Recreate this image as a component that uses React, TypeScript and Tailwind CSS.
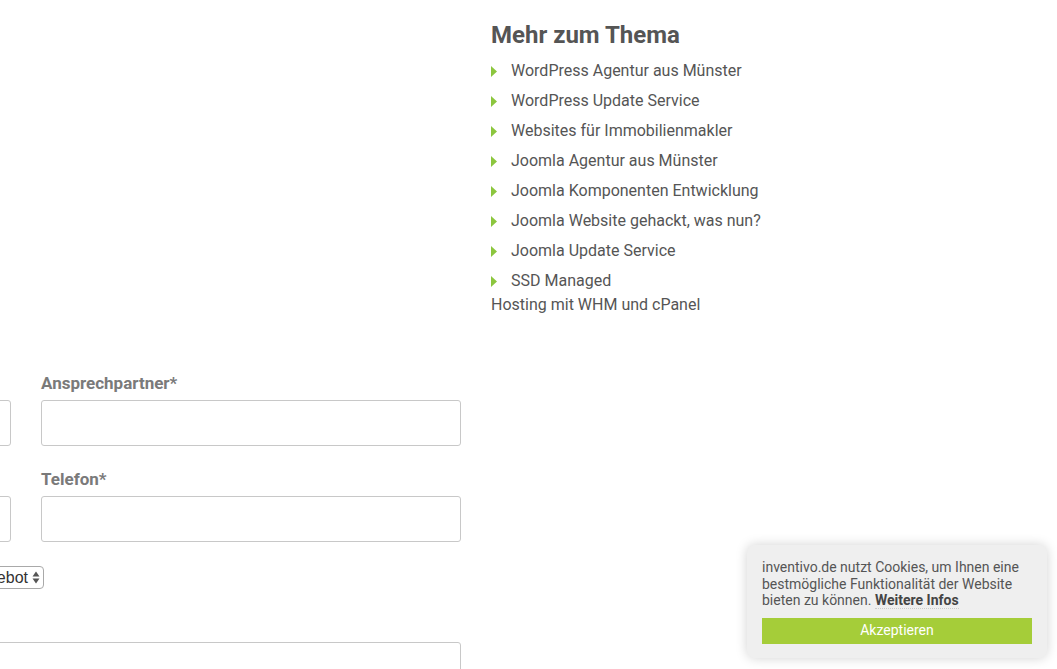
import React from 'react';

const links = [
  'WordPress Agentur aus Münster',
  'WordPress Update Service',
  'Websites für Immobilienmakler',
  'Joomla Agentur aus Münster',
  'Joomla Komponenten Entwicklung',
  'Joomla Website gehackt, was nun?',
  'Joomla Update Service',
  'SSD Managed',
];

const Arrow = () => (
  <svg width="7" height="11" viewBox="0 0 7 11" className="shrink-0 mt-[7px]">
    <path d="M0 0 L6 5.5 L0 11 Z" fill="#8cc63e" />
  </svg>
);

const Field = ({ label }: { label: string }) => (
  <div className="flex flex-col">
    <label className="text-[17px] leading-[20px] font-bold text-[#7a7a7a] mb-[7px]">{label}</label>
    <input className="h-[46px] w-full border border-[#c8c8c8] rounded-[3px] bg-white" />
  </div>
);

export default function App() {
  return (
    <div
      className="relative flex w-[1057px] h-[669px] overflow-hidden bg-white"
      style={{ fontFamily: 'Roboto, "Liberation Sans", sans-serif' }}
    >
      {/* Formular (links abgeschnitten) */}
      <div className="w-[461px] shrink-0 flex justify-end overflow-hidden">
        <form className="w-[870px] shrink-0 pt-[373px]">
          <div className="grid grid-cols-2 gap-x-[30px] gap-y-[23px]">
            <Field label="Firma*" />
            <Field label="Ansprechpartner*" />
            <Field label="E-Mail*" />
            <Field label="Telefon*" />
          </div>
          {/* Auswahl */}
          <div className="flex justify-end w-[453px] mt-[24px]">
            <div
              className="flex items-center gap-[4px] h-[23px] border border-[#a9a9a9] rounded-[4px] bg-white pl-[6px] pr-[3px] text-[16px] text-[#333]"
              style={{ fontFamily: '"Liberation Sans", Arial, sans-serif' }}
            >
              <span>Bitte wählen: Angebot</span>
              <svg width="8" height="13" viewBox="0 0 8 13">
                <path d="M4 0.5 L7.5 5.5 H0.5 Z" fill="#555" />
                <path d="M4 12.5 L7.5 7.5 H0.5 Z" fill="#555" />
              </svg>
            </div>
          </div>
          <label className="block mt-[20px] text-[17px] leading-[20px] font-bold text-[#7a7a7a]">Nachricht*</label>
          <textarea className="block mt-[13px] w-full h-[120px] border border-[#c8c8c8] rounded-[3px] resize-none" />
        </form>
      </div>

      {/* Mehr zum Thema */}
      <div className="ml-[30px] pt-[21px] text-[#555]">
        <h3 className="text-[24px] leading-[28px] font-bold text-[#555]">Mehr zum Thema</h3>
        <ul className="mt-[10px] flex flex-col gap-[6px]">
          {links.map((l) => (
            <li key={l} className="flex gap-[13px] text-[16px] leading-[24px]">
              <Arrow />
              <span>{l}</span>
            </li>
          ))}
        </ul>
        <div className="text-[16px] leading-[24px]">Hosting mit WHM und cPanel</div>
      </div>

      {/* Cookie-Hinweis */}
      <div className="absolute left-[747px] top-[545px] w-[300px] rounded-[8px] bg-[#efefef] px-[15px] pt-[14px] pb-[14px] shadow-[0_0_12px_rgba(0,0,0,0.18)]">
        <p className="text-[14px] leading-[16.5px] text-[#555]">
          inventivo.de nutzt Cookies, um Ihnen eine bestmögliche Funktionalität der Website bieten zu können.{' '}
          <a className="font-bold text-[#444] border-b border-dotted border-[#ccc]">Weitere Infos</a>
        </p>
        <button className="mt-[9px] w-full h-[26px] bg-[#a5cd39] text-white text-[14px]">Akzeptieren</button>
      </div>
    </div>
  );
}
